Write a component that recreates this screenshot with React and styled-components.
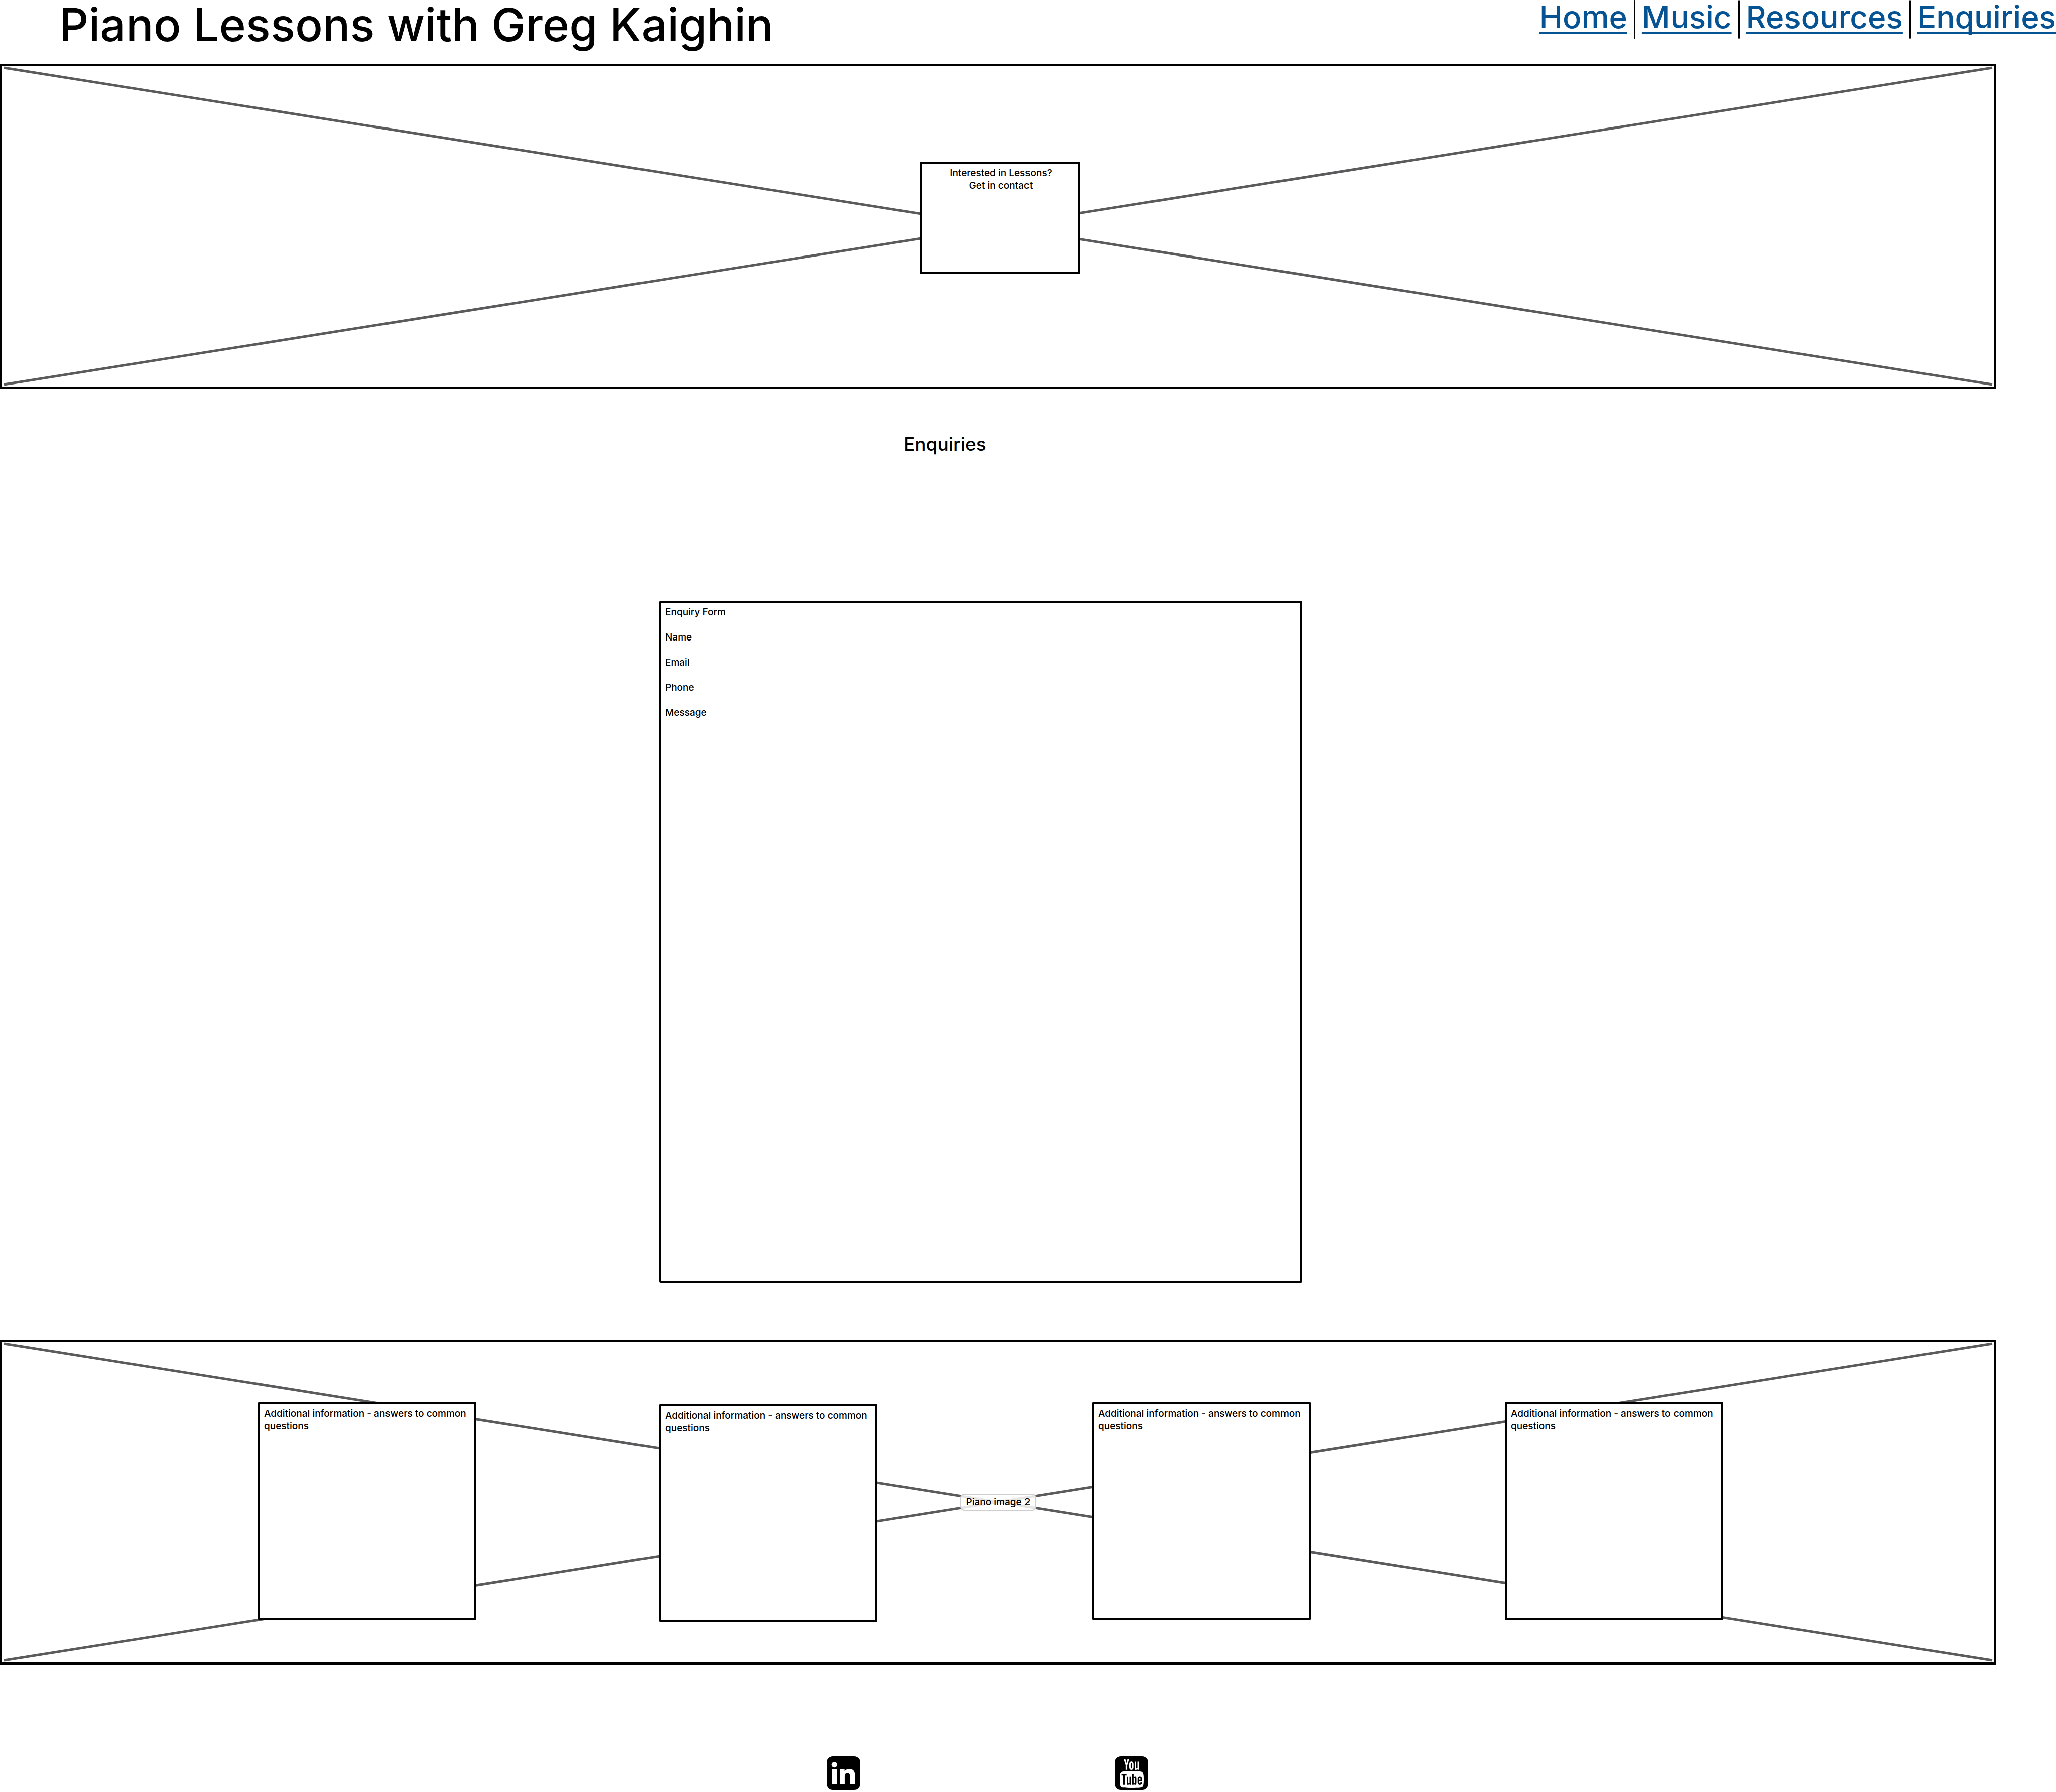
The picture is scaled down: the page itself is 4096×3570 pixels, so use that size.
import React from 'react';
import styled, { createGlobalStyle } from 'styled-components';
import { TfiYoutube } from 'react-icons/tfi';

const GlobalStyle = createGlobalStyle`
  *, *::before, *::after { box-sizing: border-box; }
  body {
    margin: 0;
    background: #fff;
    color: #000;
    font-family: Inter, 'Liberation Sans', sans-serif;
    font-weight: 500;
    font-size: 19px;
    line-height: 25px;
  }
  h1, h2, h3, p { margin: 0; font-weight: 500; }
`;

const Header = styled.header`
  display: flex;
  justify-content: space-between;
  align-items: flex-start;
  padding: 0 0 29px 118px;
`;

const SiteTitle = styled.h1`
  font-size: 91px;
  line-height: 98px;
`;

const Nav = styled.nav`
  display: flex;
  gap: 13px;
`;

const NavLink = styled.a`
  color: #055393;
  font-size: 62px;
  line-height: 68px;
  text-decoration: underline;
  text-decoration-thickness: 5px;
  text-underline-offset: 7px;
  text-decoration-skip-ink: none;
`;

const Separator = styled.span`
  width: 3px;
  height: 77px;
  border-radius: 2px;
  background: #000;
`;

const Banner = styled.section`
  position: relative;
  display: grid;
  grid-template-columns: ${(p) => p.$columns};
  align-items: start;
  min-height: 647px;
  margin-right: 119px;
  padding-top: ${(p) => p.$top};
  border: 4px solid #000;
`;

const Cross = styled.svg`
  position: absolute;
  inset: 4px;
  width: calc(100% - 8px);
  height: calc(100% - 8px);
  overflow: visible;

  line { stroke: #5b5b5d; stroke-width: 5px; }
`;

const ImageLabel = styled.span`
  position: absolute;
  top: 50%;
  left: 50%;
  transform: translate(-50%, -50%);
  padding: 0 10px;
  border: 2px solid #cecece;
  border-radius: 8px;
  background: rgba(255, 255, 255, 0.85);
  line-height: 30px;
  white-space: nowrap;
`;

const Card = styled.article`
  position: relative;
  grid-column: ${(p) => p.$column};
  min-height: ${(p) => p.$height};
  margin-top: ${(p) => (p.$lowered ? '4px' : '0')};
  padding: 6px 4px 6px 8px;
  border: 4px solid #000;
  border-radius: 3px;
  background: #fff;
  text-align: ${(p) => p.$align || 'left'};
`;

const SectionTitle = styled.h2`
  grid-column: 2;
  font-size: 37px;
  line-height: 45px;
`;

const TitleRow = styled.div`
  display: grid;
  grid-template-columns: 1800fr 2296fr;
  padding: 88px 0 290px;
`;

const FormRow = styled.div`
  display: grid;
  grid-template-columns: 1313fr 1281fr 1502fr;
  padding-bottom: 114px;
`;

const Form = styled.form`
  grid-column: 2;
  display: flex;
  flex-direction: column;
  gap: 25px;
  min-height: 1358px;
  padding: 6px 8px;
  border: 4px solid #000;
  border-radius: 3px;
`;

const FormTitle = styled.h3`
  font-size: 19px;
`;

const Field = styled.div`
  display: flex;
  gap: 12px;
  flex-grow: ${(p) => (p.$tall ? 1 : 0)};

  input, textarea {
    flex: 1;
    height: ${(p) => (p.$tall ? 'auto' : '25px')};
    padding: 0;
    border: 0;
    outline: 0;
    resize: none;
    background: transparent;
    font: inherit;
  }
`;

const Footer = styled.footer`
  display: grid;
  grid-template-columns: 1647fr 67px 507fr 67px 1808fr;
  padding: 183px 0 4px;
`;

const SocialLink = styled.a`
  grid-column: ${(p) => p.$column};
  display: flex;
  align-items: center;
  justify-content: center;
  height: 67px;
  border-radius: 12px;
  background: #000;
  color: #fff;
`;

function Diagonals() {
  return (
    <Cross aria-hidden="true">
      <line x1="0" y1="0" x2="100%" y2="100%" />
      <line x1="0" y1="100%" x2="100%" y2="0" />
    </Cross>
  );
}

function LinkedInMark() {
  return (
    <svg width="67" height="67" viewBox="0 0 250 250" fill="#fff" aria-hidden="true">
      <circle cx="57" cy="62" r="21" />
      <path d="M38 96h38v112H38z" />
      <path d="M97 96h36v16c7-12 20-19 36-19 28 0 42 19 42 50v65h-38v-58c0-17-5-27-18-27-14 0-21 11-21 27v58H97z" />
    </svg>
  );
}

const links = ['Home', 'Music', 'Resources', 'Enquiries'];
const cards = [
  { column: 2 },
  { column: 4, lowered: true },
  { column: 6 },
  { column: 8 },
];

export default function App() {
  return (
    <>
      <GlobalStyle />
      <Header>
        <SiteTitle>Piano Lessons with Greg Kaighin</SiteTitle>
        <Nav>
          {links.map((name, i) => (
            <React.Fragment key={name}>
              {i > 0 && <Separator />}
              <NavLink href={`#${name.toLowerCase()}`}>{name}</NavLink>
            </React.Fragment>
          ))}
        </Nav>
      </Header>
      <main>
        <Banner $columns="1828fr 320px 1821fr" $top="191px">
          <Diagonals />
          <Card $column={2} $height="224px" $align="center">
            <p>Interested in Lessons?</p>
            <p>Get in contact</p>
          </Card>
        </Banner>
        <TitleRow>
          <SectionTitle>Enquiries</SectionTitle>
        </TitleRow>
        <FormRow>
          <Form>
            <FormTitle>Enquiry Form</FormTitle>
            <Field>
              <label htmlFor="name">Name</label>
              <input id="name" type="text" />
            </Field>
            <Field>
              <label htmlFor="email">Email</label>
              <input id="email" type="email" />
            </Field>
            <Field>
              <label htmlFor="phone">Phone</label>
              <input id="phone" type="tel" />
            </Field>
            <Field $tall>
              <label htmlFor="message">Message</label>
              <textarea id="message" />
            </Field>
          </Form>
        </FormRow>
        <Banner
          $columns="510fr 435px 364fr 435px 428fr 435px 387fr 435px 540fr"
          $top="120px"
        >
          <Diagonals />
          <ImageLabel>Piano image 2</ImageLabel>
          {cards.map((card) => (
            <Card key={card.column} $column={card.column} $lowered={card.lowered} $height="435px">
              <p>Additional information - answers to common questions</p>
            </Card>
          ))}
        </Banner>
      </main>
      <Footer>
        <SocialLink href="#linkedin" aria-label="LinkedIn" $column={2}>
          <LinkedInMark />
        </SocialLink>
        <SocialLink href="#youtube" aria-label="YouTube" $column={4}>
          <TfiYoutube size={58} />
        </SocialLink>
      </Footer>
    </>
  );
}
